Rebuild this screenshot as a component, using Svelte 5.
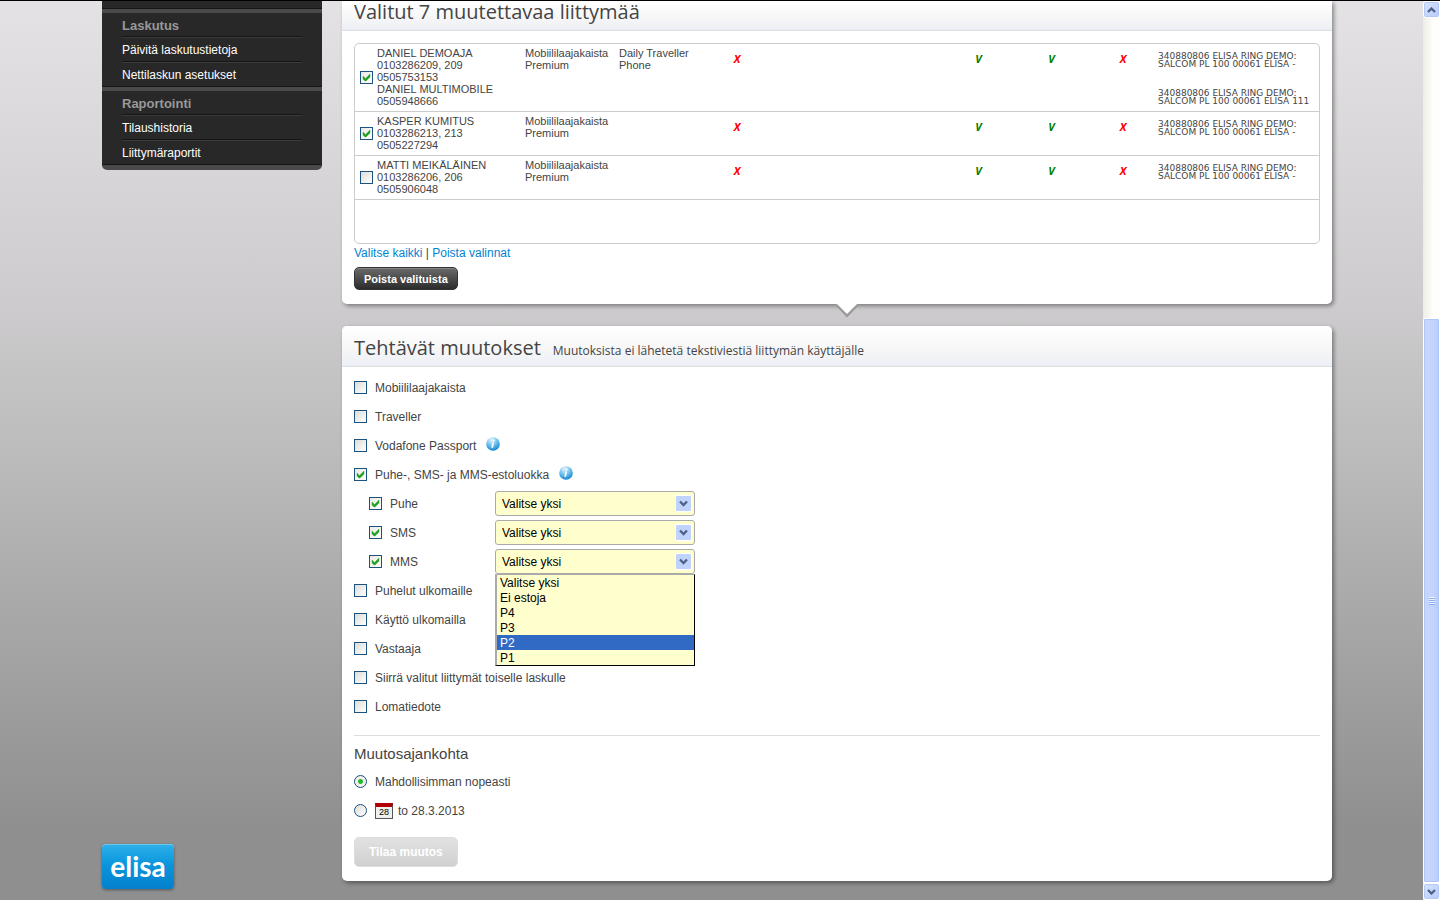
<script lang="ts">
  interface Subscription {
    lines: string[];
    selected: boolean;
    plan: string[];
    extra: string[];
    bills: string[][];
  }

  const menu = [
    { title: 'Laskutus', items: ['Päivitä laskutustietoja', 'Nettilaskun asetukset'] },
    { title: 'Raportointi', items: ['Tilaushistoria', 'Liittymäraportit'] },
  ];

  const bill = ['340880806 ELISA RING DEMO:', 'SALCOM PL 100 00061 ELISA -'];

  let rows: Subscription[] = $state([
    {
      lines: ['DANIEL DEMOAJA', '0103286209, 209', '0505753153', 'DANIEL MULTIMOBILE', '0505948666'],
      selected: true,
      plan: ['Mobiililaajakaista', 'Premium'],
      extra: ['Daily Traveller', 'Phone'],
      bills: [bill, ['340880806 ELISA RING DEMO:', 'SALCOM PL 100 00061 ELISA 111']],
    },
    {
      lines: ['KASPER KUMITUS', '0103286213, 213', '0505227294'],
      selected: true,
      plan: ['Mobiililaajakaista', 'Premium'],
      extra: [],
      bills: [bill],
    },
    {
      lines: ['MATTI MEIKÄLÄINEN', '0103286206, 206', '0505906048'],
      selected: false,
      plan: ['Mobiililaajakaista', 'Premium'],
      extra: [],
      bills: [bill],
    },
  ]);

  let changes = $state([
    { label: 'Mobiililaajakaista', checked: false },
    { label: 'Traveller', checked: false },
    { label: 'Vodafone Passport', checked: false, info: true },
    { label: 'Puhe-, SMS- ja MMS-estoluokka', checked: true, info: true, barring: true },
    { label: 'Puhelut ulkomaille', checked: false },
    { label: 'Käyttö ulkomailla', checked: false },
    { label: 'Vastaaja', checked: false },
    { label: 'Siirrä valitut liittymät toiselle laskulle', checked: false },
    { label: 'Lomatiedote', checked: false },
  ]);

  const options = ['Valitse yksi', 'Ei estoja', 'P4', 'P3', 'P2', 'P1'];

  let barring = $state([
    { label: 'Puhe', checked: true, value: options[0] },
    { label: 'SMS', checked: true, value: options[0] },
    { label: 'MMS', checked: true, value: options[0] },
  ]);

  let openList = $state('MMS');
  let highlighted = $state('P2');
  let timing = $state('now');

  function setAll(selected: boolean) {
    for (const row of rows) row.selected = selected;
  }
</script>

{#snippet infoIcon(id: string)}
  <svg class="info" viewBox="0 0 14 14" aria-label="Lisätietoja">
    <defs>
      <radialGradient id="info-{id}" cx="40%" cy="20%" r="85%">
        <stop offset="0" stop-color="#e2f4fc" />
        <stop offset="0.5" stop-color="#6cc0ec" />
        <stop offset="1" stop-color="#0c7dcc" />
      </radialGradient>
    </defs>
    <circle cx="7" cy="7" r="6.8" fill="url(#info-{id})" />
    <path d="M6.900 2.800h1.800l-.4 1.700H6.500zM6.200 5.500H8l-.9 5.300H5.300z" fill="#fff" />
  </svg>
{/snippet}

<div class="window">
  <div class="page">
    <aside>
      <nav>
        {#each menu as group}
          <section>
            <h3>{group.title}</h3>
            <ul>
              {#each group.items as item}
                <li><a href="#{item}">{item}</a></li>
              {/each}
            </ul>
          </section>
        {/each}
      </nav>
      <a class="logo" href="#elisa">elisa</a>
    </aside>

    <main>
      <section class="panel picked">
        <header><h2>Valitut 7 muutettavaa liittymää</h2></header>
        <div class="body">
          <div class="table-box">
            <table>
              <colgroup>
                <col class="c-check" /><col class="c-name" /><col class="c-plan" /><col class="c-plan" />
                <col class="c-first" /><col /><col class="c-mark" /><col class="c-mark" />
                <col class="c-last" /><col class="c-bill" />
              </colgroup>
              <tbody>
                {#each rows as row}
                  <tr>
                    <td class="check"><input type="checkbox" aria-label={row.lines[0]} bind:checked={row.selected} /></td>
                    <td>{#each row.lines as line}<div>{line}</div>{/each}</td>
                    <td>{#each row.plan as line}<div>{line}</div>{/each}</td>
                    <td>{#each row.extra as line}<div>{line}</div>{/each}</td>
                    <td class="mark no">X</td>
                    <td></td>
                    <td class="mark yes">V</td>
                    <td class="mark yes">V</td>
                    <td class="mark no">X</td>
                    <td class="bills">
                      {#each row.bills as lines}
                        <p>{#each lines as line}<span>{line}</span>{/each}</p>
                      {/each}
                    </td>
                  </tr>
                {/each}
              </tbody>
            </table>
          </div>
          <div class="links">
            <a href="#all" onclick={() => setAll(true)}>Valitse kaikki</a> |
            <a href="#none" onclick={() => setAll(false)}>Poista valinnat</a>
          </div>
          <button class="dark">Poista valituista</button>
        </div>
        <svg class="notch" viewBox="0 0 26 14">
          <path d="M0 0L13 13.5L26 0z" fill="#9a9a9a" />
          <path d="M3 0L13 10L23 0z" fill="#fff" />
        </svg>
      </section>

      <section class="panel">
        <header>
          <h2>Tehtävät muutokset</h2>
          <small>Muutoksista ei lähetetä tekstiviestiä liittymän käyttäjälle</small>
        </header>
        <div class="body changes">
          {#each changes as change, i}
            <div class="row">
              <label><input type="checkbox" bind:checked={change.checked} />{change.label}</label>
              {#if change.info}{@render infoIcon(String(i))}{/if}
            </div>
            {#if change.barring}
              {#each barring as item}
                <div class="row sub">
                  <label><input type="checkbox" bind:checked={item.checked} />{item.label}</label>
                  <div class="field">
                    <select aria-label="{item.label} estoluokka" bind:value={item.value}>
                      {#each options as option}<option>{option}</option>{/each}
                    </select>
                    {#if openList === item.label}
                      <ul class="list" role="listbox">
                        {#each options as option}
                          <li role="option" aria-selected={option === highlighted} class:active={option === highlighted}>{option}</li>
                        {/each}
                      </ul>
                    {/if}
                  </div>
                </div>
              {/each}
            {/if}
          {/each}

          <hr />
          <h4>Muutosajankohta</h4>
          <div class="row">
            <label><input type="radio" value="now" bind:group={timing} />Mahdollisimman nopeasti</label>
          </div>
          <div class="row">
            <label>
              <input type="radio" value="date" bind:group={timing} />
              <span class="calendar">28</span>
              <span>to 28.3.2013</span>
            </label>
          </div>
          <button class="submit" disabled>Tilaa muutos</button>
        </div>
      </section>
    </main>
  </div>

  <div class="scrollbar">
    <button aria-label="Ylös"><svg viewBox="0 0 9 6"><path d="M1 5l3.500-3.500L8 5" /></svg></button>
    <div class="track"><div class="thumb"><i></i></div></div>
    <button aria-label="Alas"><svg viewBox="0 0 9 6"><path d="M1 1l3.500 3.500L8 1" /></svg></button>
  </div>
</div>

<style>
  :global(body) {
    margin: 0;
    font-family: 'Liberation Sans', Arial, sans-serif;
    font-size: 12px;
    color: #444;
  }

  .window {
    display: flex;
    min-height: 100vh;
    box-sizing: border-box;
    border-top: 1px solid #000;
    background: linear-gradient(#e4e2e4, #cdcbcd 34%, #bcbcbc 50%, #a4a4a4 72%, #8f8f8f 92%);
  }

  .page {
    flex: 1;
    display: flex;
    gap: 20px;
    padding: 0 91px 0 102px;
  }

  aside {
    width: 220px;
    flex-shrink: 0;
    display: flex;
    flex-direction: column;
    justify-content: space-between;
  }

  nav {
    padding-top: 7px;
    background: #282828;
    border-bottom: 5px solid #4a4a4a;
    border-radius: 0 0 5px 5px;
  }

  nav section {
    border-top: 1px solid #151515;
  }

  nav section:last-child {
    border-bottom: 1px solid #151515;
  }

  h3 {
    margin: 0;
    padding: 2px 20px 0;
    border-top: 4px solid #4a4a4a;
    font-size: 13px;
    line-height: 21px;
    color: #999;
  }

  ul {
    margin: 0;
    padding: 0;
    list-style: none;
  }

  nav li {
    margin: 0 20px;
    padding-top: 2px;
    border-top: 1px solid #151515;
    box-shadow: inset 0 1px #3c3c3c;
    line-height: 22px;
  }

  nav a {
    color: #fff;
    text-decoration: none;
  }

  .logo {
    width: 72px;
    height: 45px;
    margin-bottom: 11px;
    border-radius: 4px;
    background: linear-gradient(#2fb0ea, #0a96dc 45%, #0580cc);
    box-shadow: inset 0 1px #6cc8f0, 0 1px 3px rgba(0, 0, 0, 0.4);
    color: #fff;
    font: bold 28px/44px Lato, sans-serif;
    text-align: center;
    text-decoration: none;
  }

  main {
    flex: 1;
    min-width: 0;
    display: flex;
    flex-direction: column;
    gap: 22px;
    padding-bottom: 19px;
  }

  .panel {
    position: relative;
    background: #fff;
    border-radius: 5px;
    box-shadow: 2px 2px 4px rgba(0, 0, 0, 0.4);
  }

  .picked {
    border-radius: 0 0 5px 5px;
  }

  header {
    display: flex;
    align-items: baseline;
    gap: 12px;
    height: 40px;
    padding: 0 12px;
    border-bottom: 1px solid #dcdee0;
    border-radius: 5px 5px 0 0;
    background: linear-gradient(#fff, #f6f6f7 60%, #ebeff5);
    font-family: 'Open Sans', sans-serif;
    line-height: 44px;
  }

  .picked header {
    height: 29px;
    border-radius: 0;
    line-height: 22px;
  }

  h2 {
    margin: 0;
    font-size: 20px;
    font-weight: 400;
  }

  small {
    font-size: 12px;
  }

  .body {
    padding: 12px 12px 14px;
  }

  .table-box {
    min-height: 199px;
    border: 1px solid #ccc;
    border-radius: 5px;
  }

  table {
    width: 100%;
    table-layout: fixed;
    border-collapse: separate;
    border-spacing: 0;
    font-size: 11px;
    line-height: 12px;
  }

  .c-check { width: 22px; }
  .c-name { width: 148px; }
  .c-plan { width: 94px; }
  .c-first { width: 48px; }
  .c-mark { width: 73px; }
  .c-last { width: 70px; }
  .c-bill { width: 161px; }

  td {
    padding: 3px 0 4px;
    border-bottom: 1px solid #ccc;
    vertical-align: top;
    white-space: nowrap;
  }

  td.check {
    padding-left: 5px;
    vertical-align: middle;
  }

  .mark {
    padding-top: 9px;
    font-family: 'Open Sans', sans-serif;
    font-weight: bold;
    font-style: italic;
    text-align: center;
  }

  .yes { color: #008000; }
  .no { color: #f00; }

  .bills {
    padding-top: 8px;
    font-family: 'DejaVu Sans', Verdana, sans-serif;
    font-size: 9px;
    line-height: 8px;
  }

  .bills p {
    margin: 0;
  }

  .bills p + p {
    margin-top: 21px;
  }

  .bills span {
    display: block;
  }

  .links {
    line-height: 18px;
  }

  .links a {
    color: #0084d4;
    text-decoration: none;
  }

  button {
    font-family: inherit;
  }

  .dark {
    display: block;
    height: 23px;
    margin-top: 5px;
    padding: 0 9px;
    border: 1px solid #333;
    border-radius: 5px;
    background: linear-gradient(#6a6a6a, #2c2c2c);
    box-shadow: inset 0 1px #858585;
    color: #fff;
    font-size: 11px;
    font-weight: bold;
  }

  .notch {
    position: absolute;
    top: 100%;
    left: 51%;
    width: 26px;
    height: 14px;
    margin-left: -13px;
  }

  .changes {
    padding-top: 6px;
  }

  .row {
    display: flex;
    align-items: center;
    gap: 10px;
    height: 29px;
  }

  label {
    display: flex;
    align-items: center;
  }

  .sub {
    gap: 0;
    padding-left: 15px;
  }

  .sub label {
    width: 126px;
  }

  input {
    appearance: none;
    box-sizing: border-box;
    flex-shrink: 0;
    width: 13px;
    height: 13px;
    margin: 0 8px 0 0;
    border: 1px solid #1c5180;
    background: linear-gradient(135deg, #dcdcd7, #fff);
  }

  td input {
    display: block;
    margin: 0;
  }

  input[type='checkbox']:checked {
    background:
      url("data:image/svg+xml,%3Csvg xmlns='http://www.w3.org/2000/svg' viewBox='0 0 11 11'%3E%3Cpath d='M2 4v3l2 2h1l4-4V2L4.500 6.500z' fill='%2321a121' stroke='%2321a121' stroke-width='.4'/%3E%3C/svg%3E"),
      linear-gradient(135deg, #e8e8e4, #fff);
  }

  input[type='radio'] {
    border-radius: 50%;
  }

  input[type='radio']:checked {
    background: radial-gradient(circle, #2cb82c 2px, #2cb82c 2px, #f0f0ec 3px);
  }

  .info {
    width: 14px;
    height: 14px;
    margin-bottom: 3px;
  }

  .field {
    position: relative;
    width: 200px;
  }

  select {
    display: block;
    appearance: none;
    box-sizing: border-box;
    width: 100%;
    height: 25px;
    padding: 0 6px;
    border: 1px solid #aaa;
    border-radius: 3px;
    background: #ffffce
      url("data:image/svg+xml,%3Csvg xmlns='http://www.w3.org/2000/svg' width='17' height='17'%3E%3Crect width='17' height='17' rx='1' fill='%23fff'/%3E%3Crect x='1' y='1' width='15' height='15' rx='1' fill='%23c0d3fc'/%3E%3Cpath d='M5 6.500l3.500 3.500L12 6.500' fill='none' stroke='%234d6185' stroke-width='2.300'/%3E%3C/svg%3E")
      no-repeat right 2px center;
    color: #000;
    font: 12px 'Liberation Sans', Arial, sans-serif;
  }

  .list {
    position: absolute;
    z-index: 1;
    top: 100%;
    left: 0;
    right: 0;
    border: 1px solid #000;
    border-top-color: #aaa;
    border-left: 2px solid #aaa;
    background: #ffffce;
    color: #000;
  }

  .list li {
    padding: 2px 0 0 3px;
    line-height: 13px;
  }

  .list .active {
    background: #316ac5;
    color: #fff;
  }

  hr {
    margin: 14px 0 0;
    border: 0;
    border-top: 1px solid #ddd;
  }

  h4 {
    margin: 0;
    padding-top: 4px;
    font-size: 15px;
    font-weight: 400;
    line-height: 27px;
  }

  .calendar {
    box-sizing: border-box;
    width: 18px;
    height: 16px;
    margin-right: 5px;
    border: 1px solid #555;
    border-top: 4px solid #b00000;
    background: #f0f0ec;
    color: #000;
    font-size: 9px;
    line-height: 11px;
    text-align: center;
  }

  .submit {
    display: block;
    height: 30px;
    margin-top: 12px;
    padding: 0 14px;
    border: 1px solid #ddd;
    border-radius: 5px;
    background: linear-gradient(#e0e2e0, #d0d0d0);
    color: #fff;
    font-size: 12px;
    font-weight: bold;
  }

  .scrollbar {
    position: sticky;
    top: 0;
    width: 17px;
    height: calc(100vh - 1px);
    display: flex;
    flex-direction: column;
    background: linear-gradient(90deg, #eeede5, #fefefb 60%);
  }

  .scrollbar button {
    height: 17px;
    padding: 0;
    border: 1px solid #fff;
    border-radius: 3px;
    background: linear-gradient(135deg, #d8e3fe, #b6cbfa);
    box-shadow: inset 0 0 0 1px #b4c8f6;
  }

  .scrollbar svg {
    display: block;
    width: 9px;
    height: 6px;
    margin: 0 auto;
    fill: none;
    stroke: #4d6185;
    stroke-width: 2.3;
  }

  .track {
    flex: 1;
    display: grid;
    grid-template-rows: 300fr 565fr;
  }

  .thumb {
    grid-row: 2;
    display: flex;
    align-items: center;
    justify-content: center;
    box-sizing: border-box;
    border: 1px solid #fff;
    border-radius: 2px;
    background: linear-gradient(90deg, #c8d6fb, #c2d4fe 60%, #b5cbfb);
    box-shadow: inset 0 0 0 1px #b0c6f5;
  }

  .thumb i {
    width: 6px;
    height: 8px;
    background: repeating-linear-gradient(#eef4fe 0 1px, #8cb0f8 1px 2px);
  }
</style>
